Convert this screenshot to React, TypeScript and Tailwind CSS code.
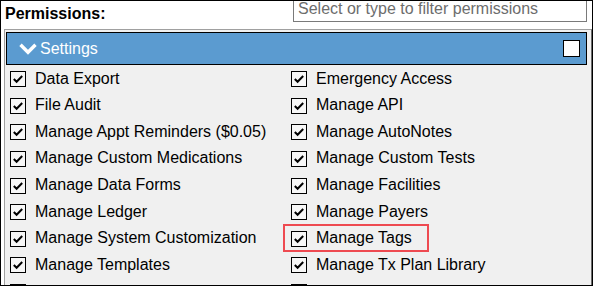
import React from "react";

const leftItems = [
  "Data Export",
  "File Audit",
  "Manage Appt Reminders ($0.05)",
  "Manage Custom Medications",
  "Manage Data Forms",
  "Manage Ledger",
  "Manage System Customization",
  "Manage Templates",
];

const rightItems = [
  "Emergency Access",
  "Manage API",
  "Manage AutoNotes",
  "Manage Custom Tests",
  "Manage Facilities",
  "Manage Payers",
  "Manage Tags",
  "Manage Tx Plan Library",
];

function CheckBox() {
  return (
    <svg width="16" height="16" viewBox="0 0 16 16" className="shrink-0 mt-[2px]">
      <rect x="0.5" y="0.5" width="15" height="15" fill="#f7f7f7" stroke="#000" />
      <path d="M3.8 8 L6.6 10.8 L12.2 5" fill="none" stroke="#000" strokeWidth="2" />
    </svg>
  );
}

function PermRow({ label, highlight }: { label?: string; highlight?: boolean }) {
  return (
    <div className="relative flex items-center h-[26.57px] gap-[9px] whitespace-nowrap">
      <CheckBox />
      {label && <span className="mt-[1px] text-[16px] leading-[18px] text-black">{label}</span>}
      {highlight && (
        <div className="absolute left-[-8px] top-0 w-[146px] h-[28px] border-2 border-[#ee4a51]" />
      )}
    </div>
  );
}

export default function App() {
  const rows = leftItems.map((l, i) => [l, rightItems[i]]);

  return (
    <div
      className="w-[593px] h-[286px] border border-black bg-white overflow-hidden"
      style={{ fontFamily: '"Liberation Sans", Arial, sans-serif' }}
    >
      {/* header */}
      <div className="flex items-start justify-between h-[28px]">
        <div className="pl-[4px] pt-[4px] text-[16px] leading-[18px] font-bold text-black">Permissions:</div>
        <div className="w-[294px] h-[21px] mr-[5px] border-x border-b border-[#7a7a7a] bg-white overflow-hidden">
          <div className="pl-[4px] -mt-[1px] text-[16px] leading-[18px] text-[#6d6d6d] whitespace-nowrap">
            Select or type to filter permissions
          </div>
        </div>
      </div>

      {/* panel */}
      <div className="ml-[3px] h-[300px] border-t border-l border-r border-[#a0a0a0] border-r-[#6a6a6a] bg-[#f0f0f0]">
        <div className="mt-[2px] ml-[1px] mr-[4px] h-[33px] border border-black bg-[#5b9bd0] flex items-center justify-between pl-[12px] pr-[6px]">
          <div className="flex items-center gap-[3px] text-white text-[16px] leading-[18px]">
            <svg width="18" height="12" viewBox="0 0 18 12" className="mt-[1px]">
              <path d="M1.5 1.8 L9 9.3 L16.5 1.8" fill="none" stroke="#fff" strokeWidth="3.4" />
            </svg>
            <span>Settings</span>
          </div>
          <div className="w-[17px] h-[17px] border border-black bg-white -mt-[1px]" />
        </div>

        <div className="grid grid-cols-[281px_281px] pl-[5px]">
          {rows.map(([l, r]) => (
            <React.Fragment key={l}>
              <PermRow label={l} />
              <PermRow label={r} highlight={r === "Manage Tags"} />
            </React.Fragment>
          ))}
          <PermRow />
          <PermRow />
        </div>
      </div>
    </div>
  );
}
